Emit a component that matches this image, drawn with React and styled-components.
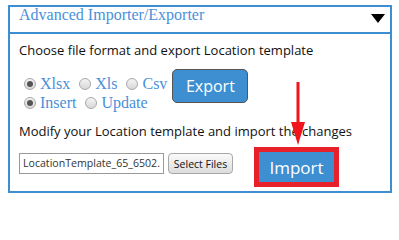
import React from 'react';
import styled, { createGlobalStyle } from 'styled-components';

const GlobalStyle = createGlobalStyle`
  body {
    margin: 0;
    background: #ffffff;
  }
`;

const Page = styled.div`
  padding: 5px 7px 0 8px;
`;

const Panel = styled.div`
  position: relative;
  width: 380px;
  height: 184px;
  border: 2px solid #3d8fd1;
`;

const Header = styled.div`
  display: flex;
  align-items: flex-start;
  justify-content: space-between;
  height: 25px;
  padding: 0 5px 0 9px;
  border-bottom: 2px solid #3d8fd1;
  font-family: "Liberation Serif", serif;
  font-size: 16px;
  line-height: 16px;
  color: #4a90d9;
`;

const Caret = styled.span`
  width: 0;
  height: 0;
  border-left: 7px solid transparent;
  border-right: 7px solid transparent;
  border-top: 9px solid #000;
  margin-top: 7px;
`;

const Body = styled.div`
  display: flex;
  flex-direction: column;
  padding: 7px 9px 0 9px;
  font-family: "Open Sans", sans-serif;
  font-size: 13px;
  color: #111;
`;

const Line = styled.div`
  height: 18px;
  line-height: 18px;
`;

const ExportRow = styled.div`
  display: flex;
  align-items: flex-start;
  gap: 5px;
  margin-top: 10px;
  margin-bottom: 10px;
`;

const RadioGroup = styled.div`
  display: flex;
  flex-direction: column;
  padding: 5px 0 0 5px;
`;

const RadioLine = styled.div`
  display: flex;
  align-items: center;
  gap: 9px;
  height: 19px;
`;

const RadioItem = styled.label`
  display: flex;
  align-items: center;
  gap: 4px;
  font-family: "Liberation Serif", serif;
  font-size: 16px;
  color: #4a90d9;
`;

const Dot = styled.span`
  position: relative;
  width: 10px;
  height: 10px;
  border-radius: 50%;
  border: 1px solid #a8a8a8;
  background: linear-gradient(#f4f4f4, #d8d8d8);
  &::after {
    content: "";
    display: ${(p) => (p.checked ? 'block' : 'none')};
    position: absolute;
    left: 2px;
    top: 2px;
    width: 6px;
    height: 6px;
    border-radius: 50%;
    background: #555;
  }
`;

const ExportButton = styled.button`
  width: 76px;
  height: 34px;
  border: 1px solid #555;
  border-radius: 5px;
  background: #3d8fd1;
  color: #fff;
  font-family: "Open Sans", sans-serif;
  font-size: 16px;
  padding: 0;
`;

const ImportRow = styled.div`
  display: flex;
  align-items: flex-start;
  margin-top: 7px;
`;

const FileName = styled.div`
  width: 139px;
  height: 19px;
  margin-top: 6px;
  border: 1px solid #999;
  padding: 0 1px 0 3px;
  font-size: 10.6px;
  line-height: 19px;
  white-space: nowrap;
  overflow: hidden;
  color: #333;
`;

const SelectButton = styled.button`
  width: 65px;
  height: 21px;
  margin-top: 6px;
  margin-left: 4px;
  border: 1px solid #a8a8a8;
  border-radius: 4px;
  background: linear-gradient(#fbfbfb, #dcdcdc);
  font-family: "Open Sans", sans-serif;
  font-size: 10.5px;
  white-space: nowrap;
  color: #111;
  padding: 0;
`;

const ImportFrame = styled.div`
  margin-left: 21px;
  border: 5px solid #e8202a;
`;

const ImportButton = styled.button`
  display: block;
  width: 75px;
  height: 30px;
  border: 0;
  background: #3d8fd1;
  color: #fff;
  font-family: "Open Sans", sans-serif;
  font-size: 17px;
  padding: 0;
`;

// red pointer drawn over the panel
const Arrow = styled.svg`
  position: absolute;
  left: 281px;
  top: 75px;
`;

export default function App() {
  return (
    <Page>
      <GlobalStyle />
      <Panel>
        <Header>
          <span>Advanced Importer/Exporter</span>
          <Caret />
        </Header>
        <Body>
          <Line>Choose file format and export Location template</Line>
          <ExportRow>
            <RadioGroup>
              <RadioLine>
                <RadioItem><Dot checked />Xlsx</RadioItem>
                <RadioItem><Dot />Xls</RadioItem>
                <RadioItem><Dot />Csv</RadioItem>
              </RadioLine>
              <RadioLine>
                <RadioItem><Dot checked />Insert</RadioItem>
                <RadioItem><Dot />Update</RadioItem>
              </RadioLine>
            </RadioGroup>
            <ExportButton>Export</ExportButton>
          </ExportRow>
          <Line>Modify your Location template and import the changes</Line>
          <ImportRow>
            <FileName>LocationTemplate_65_6502.</FileName>
            <SelectButton>Select Files</SelectButton>
            <ImportFrame>
              <ImportButton>Import</ImportButton>
            </ImportFrame>
          </ImportRow>
        </Body>
        <Arrow width="14" height="64" viewBox="0 0 14 64">
          <rect x="5.5" y="0" width="3" height="42" fill="#f0141e" />
          <polygon points="0,40 14,40 7,63" fill="#f0141e" />
        </Arrow>
      </Panel>
    </Page>
  );
}
